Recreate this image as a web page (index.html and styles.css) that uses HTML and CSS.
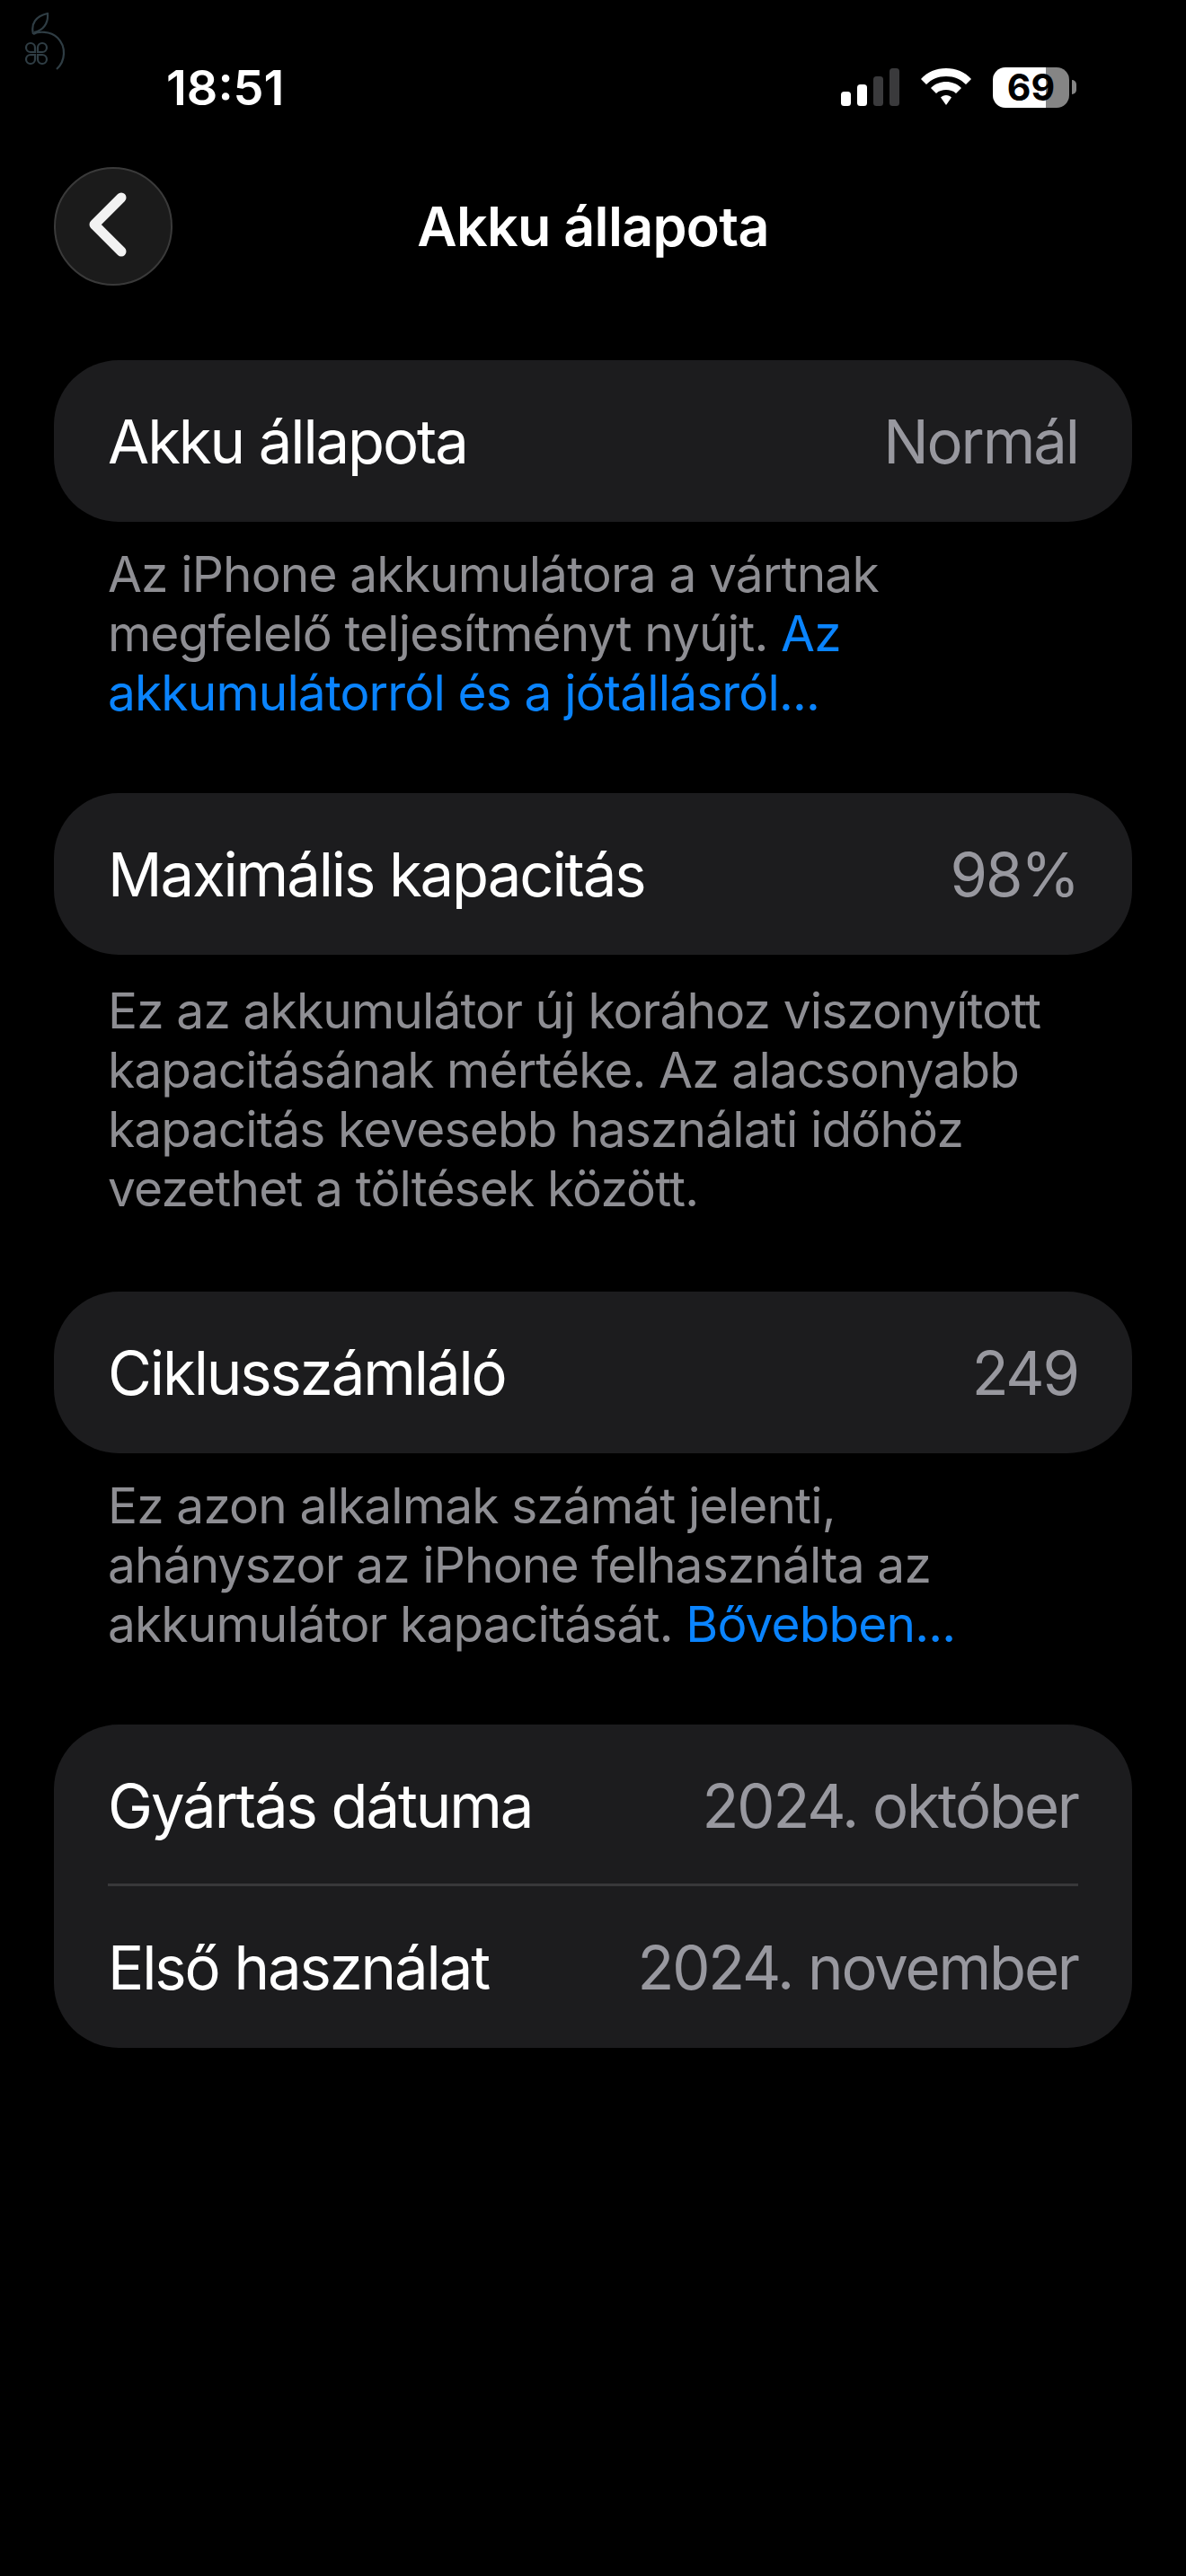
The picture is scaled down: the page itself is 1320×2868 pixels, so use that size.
FILE: index.html
```html
<!DOCTYPE html>
<html lang="hu">
<head>
  <meta charset="UTF-8">
  <meta name="viewport" content="width=device-width, initial-scale=1.0">
  <title>Akku állapota</title>
  <link rel="stylesheet" href="styles.css">
</head>
<body>
  <svg class="watermark" width="48" height="66" viewBox="0 0 48 66" fill="none" stroke="#2f3d44" stroke-width="2.2">
    <path d="M11 24 C8 12 14 4 27 1 C28 12 22 20 12 22"/>
    <path d="M11 24 C16 21 30 20 38 28 C48 38 47 54 37 63"/>
    <path d="M13 44 H8 A5 5 0 1 1 13 39 Z"/>
    <path d="M16 44 V39 A5 5 0 1 1 21 44 Z"/>
    <path d="M13 47 V52 A5 5 0 1 1 8 47 Z"/>
    <path d="M16 47 H21 A5 5 0 1 1 16 52 Z"/>
  </svg>

  <div class="status-bar">
    <span class="time">18:51</span>
    <div class="status-icons">
      <svg width="65" height="42" viewBox="0 0 65 42">
        <rect x="0" y="26" width="11" height="16" rx="3.500" fill="#fff"/>
        <rect x="18" y="18" width="11" height="24" rx="3.500" fill="#fff"/>
        <rect x="36" y="9" width="11" height="33" rx="3.500" fill="#3a3a3c"/>
        <rect x="54" y="0" width="11" height="42" rx="3.500" fill="#3a3a3c"/>
      </svg>
      <svg width="58" height="42" viewBox="0 0 58 42" fill="#fff">
        <path d="M29 0 C40 0 50 4 57 12 L51 18 C45 12 38 9 29 9 C20 9 13 12 7 18 L1 12 C8 4 18 0 29 0 Z"/>
        <path d="M29 15 C35 15 41 17 46 22 L40 28 C37 25 33 24 29 24 C25 24 21 25 18 28 L12 22 C17 17 23 15 29 15 Z"/>
        <path d="M29 30 C31.500 30 33.500 31 35 32.500 L29 41 L23 32.500 C24.500 31 26.500 30 29 30 Z"/>
      </svg>
      <div class="battery">
        <div class="battery-body">
          <span class="battery-level">69</span>
        </div>
        <div class="battery-cap"></div>
      </div>
    </div>
  </div>

  <header class="nav">
    <button class="back" aria-label="Vissza">
      <svg width="44" height="76" viewBox="0 0 44 76" fill="none" stroke="#f2f2f2" stroke-width="11" stroke-linecap="round" stroke-linejoin="round">
        <path d="M36 6 L6 36 L36 66"/>
      </svg>
    </button>
    <h1>Akku állapota</h1>
  </header>

  <main class="content">
    <section class="group">
      <div class="card">
        <div class="row"><span>Akku állapota</span><span class="value">Normál</span></div>
      </div>
      <p class="note">Az iPhone akkumulátora a vártnak megfelelő teljesítményt nyújt. <a href="#">Az akkumulátorról és a jótállásról...</a></p>
    </section>

    <section class="group group-long">
      <div class="card">
        <div class="row"><span>Maximális kapacitás</span><span class="value">98%</span></div>
      </div>
      <p class="note">Ez az akkumulátor új korához viszonyított kapacitásának mértéke. Az alacsonyabb kapacitás kevesebb használati időhöz vezethet a töltések között.</p>
    </section>

    <section class="group">
      <div class="card">
        <div class="row"><span>Ciklusszámláló</span><span class="value">249</span></div>
      </div>
      <p class="note">Ez azon alkalmak számát jelenti, ahányszor az iPhone felhasználta az akkumulátor kapacitását. <a href="#">Bővebben...</a></p>
    </section>

    <section class="group">
      <div class="card">
        <div class="row row-split"><span>Gyártás dátuma</span><span class="value">2024. október</span></div>
        <div class="row"><span>Első használat</span><span class="value">2024. november</span></div>
      </div>
    </section>
  </main>
</body>
</html>
```

FILE: styles.css
```css
body {
  font-family: Inter, "Liberation Sans", sans-serif;
  margin: 0;
  padding: 0;
  background: #000;
  color: #fff;
  height: 2868px;
  overflow: hidden;
  position: relative;
}
.watermark {
  position: absolute;
  left: 26px;
  top: 14px;
}
.status-bar {
  display: flex;
  justify-content: space-between;
  align-items: center;
  height: 62px;
  padding: 66px 122px 0 185px;
}
.time {
  font-size: 54px;
  font-weight: 600;
}
.status-icons {
  display: flex;
  align-items: center;
  gap: 23px;
}
.battery {
  display: flex;
  align-items: center;
  gap: 3px;
}
.battery-body {
  width: 85px;
  height: 45px;
  border-radius: 14px;
  background: linear-gradient(90deg, #fff 69%, #858585 69%);
  display: flex;
  align-items: center;
  justify-content: center;
}
.battery-level {
  color: #000;
  font-size: 41px;
  font-weight: 700;
}
.battery-cap {
  width: 5px;
  height: 16px;
  background: #858585;
  border-radius: 0 5px 5px 0;
}
.nav {
  display: flex;
  align-items: center;
  justify-content: center;
  position: relative;
  height: 132px;
  margin-top: 58px;
}
.nav h1 {
  margin: 0;
  font-size: 61px;
  font-weight: 600;
  letter-spacing: -0.7px;
}
.back {
  position: absolute;
  left: 60px;
  top: 0;
  width: 132px;
  height: 132px;
  border-radius: 50%;
  background: #1b1b1b;
  border: 2px solid #3a3a3a;
  padding: 0 10px 0 0;
  display: flex;
  align-items: center;
  justify-content: center;
}
.content {
  display: flex;
  flex-direction: column;
  margin-top: 83px;
  padding: 0 60px;
}
.group {
  margin-bottom: 79px;
}
.group-long {
  margin-bottom: 82px;
}
.card {
  background: #1c1c1e;
  border-radius: 72px;
  padding: 0 60px;
}
.row {
  display: flex;
  justify-content: space-between;
  align-items: center;
  height: 180px;
  font-size: 67px;
  letter-spacing: -2.1px;
}
.row-split {
  box-shadow: inset 0 -3px 0 #38383a;
}
.value {
  color: #98989f;
}
.note {
  margin: 25px 0 0;
  padding: 0 60px;
  font-size: 55px;
  line-height: 66px;
  letter-spacing: -0.85px;
  color: #8e8e93;
}
.group-long .note {
  margin-top: 29px;
}
.note a {
  color: #0a84ff;
  text-decoration: none;
}
```
